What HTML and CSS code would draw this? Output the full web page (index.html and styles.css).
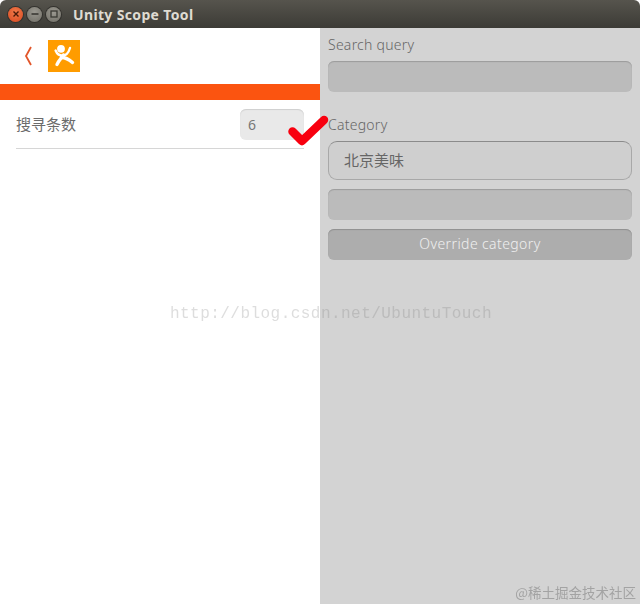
FILE: index.html
```html
<!DOCTYPE html>
<html lang="zh">
<head>
<meta charset="utf-8">
<title>Unity Scope Tool</title>
<link rel="stylesheet" href="styles.css">
</head>
<body>
<div class="window">
  <header class="titlebar">
    <div class="controls">
      <span class="ctl close"><svg width="8" height="8" viewBox="0 0 8 8"><path d="M1.5 1.5l5 5M6.5 1.5l-5 5" stroke="#4a1a08" stroke-width="1.4"/></svg></span>
      <span class="ctl"><svg width="8" height="8" viewBox="0 0 8 8"><path d="M0.5 4h7" stroke="#3a3934" stroke-width="1.6"/></svg></span>
      <span class="ctl"><svg width="8" height="8" viewBox="0 0 8 8"><rect x="1" y="1" width="6" height="6" fill="none" stroke="#3a3934" stroke-width="1.3"/></svg></span>
    </div>
    <span class="title">Unity Scope Tool</span>
  </header>
  <main class="panes">
    <section class="left">
      <div class="appbar">
        <svg class="back" width="8" height="20" viewBox="0 0 8 20"><path d="M7 1L2 10L7 19" fill="none" stroke="#e2562a" stroke-width="1.8"/></svg>
        <span class="logo">
          <svg width="32" height="32" viewBox="0 0 32 32">
            <circle cx="13" cy="8.8" r="3.9" fill="#fff"/>
            <path d="M7.6 10.5C9 14 11.5 15.6 14.5 15.6C18 15.6 20.8 12 22 8" fill="none" stroke="#fff" stroke-width="2.4" stroke-linecap="round"/>
            <path d="M15.5 15C13.5 18 10.5 20.5 9 24.5" fill="none" stroke="#fff" stroke-width="3.4" stroke-linecap="round"/>
            <path d="M13.5 17.5C17.5 17.5 21 19.5 24.5 22.5" fill="none" stroke="#fff" stroke-width="3.4" stroke-linecap="round"/>
          </svg>
        </span>
      </div>
      <div class="accent"></div>
      <div class="setting">
        <span class="setting-label">搜寻条数</span>
        <span class="num-input">6</span>
      </div>
    </section>
    <section class="right">
      <div class="label first">Search query</div>
      <div class="field"></div>
      <div class="label second">Category</div>
      <div class="field value">北京美味</div>
      <div class="field gap"></div>
      <div class="button">Override category</div>
    </section>
  </main>
  <svg class="check" width="44" height="40" viewBox="0 0 44 40"><path d="M4.5 19.5L14 29L36 8" fill="none" stroke="#f8000f" stroke-width="8.5" stroke-linecap="round" stroke-linejoin="round"/></svg>
  <div class="mark-blog">http://blog.csdn.net/UbuntuTouch</div>
  <div class="mark-credit">@稀土掘金技术社区</div>
</div>
</body>
</html>
```
FILE: styles.css
```css
* { box-sizing: border-box; }
html, body { margin: 0; height: 100%; background: #fff; }
body { overflow: hidden; font-family: "Noto Sans", "Noto Sans CJK SC", sans-serif; }
.window { position: relative; width: 640px; height: 604px; display: flex; flex-direction: column; }
.titlebar {
  height: 28px; flex: none; display: flex; align-items: center;
  background: linear-gradient(#56544d, #3c3b36);
  border-radius: 6px 6px 0 0;
}
.controls { display: flex; gap: 4px; margin-left: 8px; }
.ctl {
  width: 15px; height: 15px; border-radius: 50%;
  display: flex; align-items: center; justify-content: center;
  background: radial-gradient(circle at 50% 35%, #9a9890, #706e66);
  box-shadow: 0 0 0 1px #33322e;
}
.ctl.close { background: radial-gradient(circle at 50% 35%, #f07a4a, #d9481f); }
.title { margin-left: 12px; color: #dfdbd2; font-size: 14px; font-weight: 700; letter-spacing: 0.35px; }
.panes { flex: 1; display: flex; }
.left { width: 320px; background: #fff; display: flex; flex-direction: column; }
.appbar { height: 56px; display: flex; align-items: center; padding-left: 24px; }
.back { margin-right: 16px; }
.logo { width: 32px; height: 32px; background: #ff9c00; display: block; }
.logo svg { display: block; }
.accent { height: 16px; background: #fb5410; }
.setting {
  height: 49px; margin: 0 16px; display: flex; align-items: center; justify-content: space-between;
  border-bottom: 1px solid #d6d6d6;
}
.setting-label { font-size: 15px; color: #6b6b6b; line-height: 20px; }
.num-input {
  width: 64px; height: 31px; border-radius: 6px; background: #e9e9e9;
  box-shadow: inset 0 1px 1px #cfcfcf; color: #777; font-size: 14px;
  display: flex; align-items: center; padding-left: 8px;
}
.right { width: 320px; background: #d3d3d3; padding: 0 8px; display: flex; flex-direction: column; }
.label { font-size: 14px; font-weight: 300; color: #666; line-height: 20px; letter-spacing: 0.25px; }
.label.first { margin-top: 7px; margin-bottom: 6px; }
.label.second { margin-top: 23px; margin-bottom: 6px; }
.field {
  height: 31px; border-radius: 6px; background: #bbb;
  box-shadow: inset 0 1px 1px #9c9c9c;
}
.field.gap { margin-top: 9px; }
.field.value {
  height: 39px; background: #cfcfcf; border: 1px solid #a8a8a8;
  border-top-color: #8b8b8b; border-radius: 9px; box-shadow: none;
  color: #666; font-size: 15px; line-height: 20px; display: flex; align-items: center; padding: 0 15px 2px;
}
.button {
  height: 31px; margin-top: 9px; border-radius: 6px; background: #adadad;
  box-shadow: inset 0 1px 1px #8f8f8f; color: #f0f0f0; font-size: 14px; font-weight: 300; letter-spacing: 0.4px;
  display: flex; align-items: center; justify-content: center; padding-bottom: 2px;
}
.check { position: absolute; left: 288px; top: 112px; }
.mark-blog {
  position: absolute; left: 170px; top: 305px; white-space: nowrap;
  font-family: "Liberation Mono", monospace; font-size: 16px; letter-spacing: 0.46px;
  color: rgba(120, 120, 120, 0.25); filter: blur(0.4px);
}
.mark-credit {
  position: absolute; right: 4px; bottom: 4px; font-size: 13.5px; line-height: 16px; white-space: nowrap;
  font-family: "Noto Sans CJK SC", sans-serif; color: #a3a3a3; filter: blur(0.3px);
}
```
